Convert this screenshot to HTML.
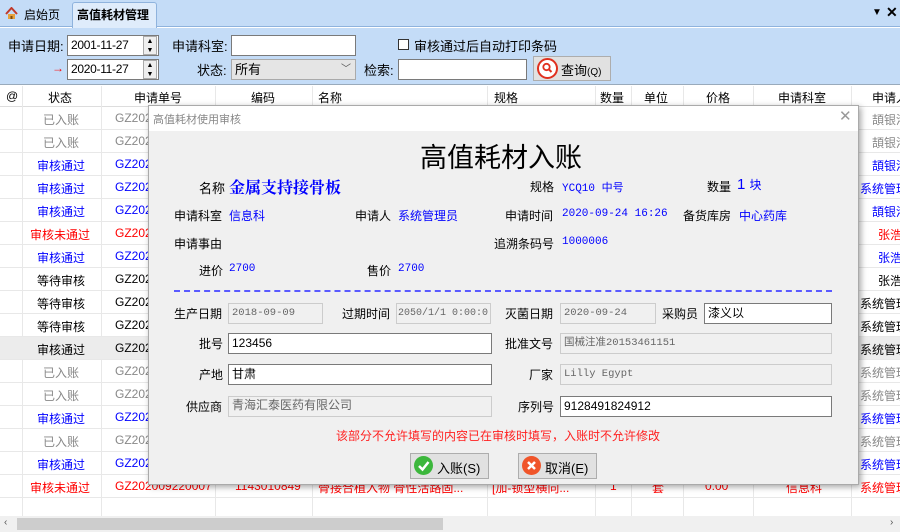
<!DOCTYPE html>
<html><head><meta charset="utf-8">
<style>
*{margin:0;padding:0;box-sizing:border-box}
body{width:900px;height:532px;overflow:hidden;position:relative;background:#fff;font-family:"Liberation Sans","Noto Sans CJK SC",sans-serif;font-size:12px;color:#000}
.a{position:absolute;white-space:nowrap}
.inp{position:absolute;background:#fff;border:1px solid #7a7a7a;height:21px;font-size:12px;line-height:19px;padding-left:3px;overflow:hidden}
.ro{background:#f0f0f0;border:1px solid #ccc;color:#666;font-family:"Liberation Mono","Noto Sans CJK SC",monospace;font-size:10.5px}
.row{position:absolute;left:0;width:900px;height:23px;border-bottom:1px solid #e8e8e8}
.row span{position:absolute;top:4px;white-space:nowrap}
.g{color:#888}.b{color:#0000ff}.r{color:#ff0000}.k{color:#000}
.hd span{position:absolute;top:3px}
.vl{position:absolute;top:86px;width:1px;height:430px;background:#e8e8e8}
.lbl{position:absolute;white-space:nowrap;font-size:12px}
.val{position:absolute;white-space:nowrap;color:#0000ff;font-size:12px}
.mono{font-family:"Liberation Mono","Noto Sans CJK SC",monospace;font-size:11px}
</style></head><body>
<div class="a" style="left:0;top:0;width:900px;height:27px;background:#c4dcf7;border-bottom:1px solid #8fb3dd"></div>
<div class="a" style="left:5px;top:7px;width:13px;height:13px">
<svg width="13" height="13"><path d="M1 7 L6.5 1 L12 7" fill="none" stroke="#c0392b" stroke-width="2"/><rect x="3" y="7" width="7" height="5" fill="#e8a13a"/><rect x="5.5" y="9" width="2" height="3" fill="#7a4a10"/></svg></div>
<div class="a" style="left:24px;top:6px;font-size:12px">启始页</div>
<div class="a" style="left:72px;top:2px;width:85px;height:26px;background:#dfecfb;border:1px solid #8fb3dd;border-bottom:none;border-radius:3px 3px 0 0"></div>
<div class="a" style="left:77px;top:6px;font-weight:bold;font-size:12px">高值耗材管理</div>
<div class="a" style="left:872px;top:7px;font-size:10px">▼</div>
<div class="a" style="left:886px;top:4px;font-size:14px;font-weight:bold">✕</div>
<div class="a" style="left:0;top:28px;width:900px;height:57px;background:#c4dcf7;border-bottom:1px solid #9ab"></div>
<div class="a" style="left:8px;top:36px;font-size:13px">申请日期:</div>
<div class="inp" style="left:67px;top:35px;width:92px;letter-spacing:-0.3px">2001-11-27</div>
<div class="a" style="left:143px;top:36px;width:14px;height:19px;border:1px solid #aaa;background:#eee;font-size:7px;line-height:9px;text-align:center">▲<br>▼</div>
<div class="a" style="left:52px;top:61px;color:red;font-size:12px">→</div>
<div class="inp" style="left:67px;top:59px;width:92px;letter-spacing:-0.3px">2020-11-27</div>
<div class="a" style="left:143px;top:60px;width:14px;height:19px;border:1px solid #aaa;background:#eee;font-size:7px;line-height:9px;text-align:center">▲<br>▼</div>
<div class="a" style="left:172px;top:36px;font-size:13px">申请科室:</div>
<div class="inp" style="left:231px;top:35px;width:125px"></div>
<div class="a" style="left:197px;top:60px;font-size:13px">状态:</div>
<div class="inp" style="left:231px;top:59px;width:125px;background:#e5e5e5;border-color:#aaa;font-size:13px">所有<span style="position:absolute;right:4px;top:0;font-size:10px;color:#555">﹀</span></div>
<div class="a" style="left:398px;top:39px;width:11px;height:11px;border:1px solid #333;background:#fff"></div>
<div class="a" style="left:414px;top:36px;font-size:13px">审核通过后自动打印条码</div>
<div class="a" style="left:364px;top:60px;font-size:13px">检索:</div>
<div class="inp" style="left:398px;top:59px;width:129px"></div>
<div class="a" style="left:533px;top:56px;width:78px;height:25px;background:#e1e1e1;border:1px solid #adadad"></div>
<div class="a" style="left:537px;top:58px;width:21px;height:21px;border:2px solid #e0301e;border-radius:50%;background:#fff"><svg width="17" height="17"><circle cx="7.5" cy="7" r="3.2" fill="none" stroke="#e0301e" stroke-width="1.8"/><path d="M10 9.5 L12.5 12" stroke="#e0301e" stroke-width="2"/></svg></div>
<div class="a" style="left:561px;top:60px;font-size:13px">查询<span style="font-size:10px">(Q)</span></div>
<div class="a hd" style="left:0;top:86px;width:900px;height:21px;background:#fff;border-bottom:1px solid #ddd">
<span style="left:6px">@</span><span style="left:48px">状态</span><span style="left:134px">申请单号</span><span style="left:251px">编码</span><span style="left:318px">名称</span><span style="left:494px">规格</span><span style="left:600px">数量</span><span style="left:644px">单位</span><span style="left:706px">价格</span><span style="left:778px">申请科室</span><span style="left:872px">申请人</span></div>
<div class="vl" style="left:22px"></div><div class="vl" style="left:101px"></div><div class="vl" style="left:215px"></div><div class="vl" style="left:312px"></div><div class="vl" style="left:487px"></div><div class="vl" style="left:595px"></div><div class="vl" style="left:631px"></div><div class="vl" style="left:683px"></div><div class="vl" style="left:753px"></div><div class="vl" style="left:851px"></div>
<div class="row g" style="top:107px"><span style="left:43px">已入账</span><span style="left:115px">GZ2020</span><span style="left:872px">頡银港</span></div>
<div class="row g" style="top:130px"><span style="left:43px">已入账</span><span style="left:115px">GZ2020</span><span style="left:872px">頡银港</span></div>
<div class="row b" style="top:153px"><span style="left:37px">审核通过</span><span style="left:115px">GZ2020</span><span style="left:872px">頡银港</span></div>
<div class="row b" style="top:176px"><span style="left:37px">审核通过</span><span style="left:115px">GZ2020</span><span style="left:860px">系统管理</span></div>
<div class="row b" style="top:199px"><span style="left:37px">审核通过</span><span style="left:115px">GZ2020</span><span style="left:872px">頡银港</span></div>
<div class="row r" style="top:222px"><span style="left:30px">审核未通过</span><span style="left:115px">GZ2020</span><span style="left:878px">张浩</span></div>
<div class="row b" style="top:245px"><span style="left:37px">审核通过</span><span style="left:115px">GZ2020</span><span style="left:878px">张浩</span></div>
<div class="row k" style="top:268px"><span style="left:37px">等待审核</span><span style="left:115px">GZ2020</span><span style="left:878px">张浩</span></div>
<div class="row k" style="top:291px"><span style="left:37px">等待审核</span><span style="left:115px">GZ2020</span><span style="left:860px">系统管理</span></div>
<div class="row k" style="top:314px"><span style="left:37px">等待审核</span><span style="left:115px">GZ2020</span><span style="left:860px">系统管理</span></div>
<div class="row k" style="top:337px;background:#ececec"><span style="left:37px">审核通过</span><span style="left:115px">GZ2020</span><span style="left:860px">系统管理</span></div>
<div class="row g" style="top:360px"><span style="left:43px">已入账</span><span style="left:115px">GZ2020</span><span style="left:860px">系统管理</span></div>
<div class="row g" style="top:383px"><span style="left:43px">已入账</span><span style="left:115px">GZ2020</span><span style="left:860px">系统管理</span></div>
<div class="row b" style="top:406px"><span style="left:37px">审核通过</span><span style="left:115px">GZ2020</span><span style="left:860px">系统管理</span></div>
<div class="row g" style="top:429px"><span style="left:43px">已入账</span><span style="left:115px">GZ2020</span><span style="left:860px">系统管理</span></div>
<div class="row b" style="top:452px"><span style="left:37px">审核通过</span><span style="left:115px">GZ2020</span><span style="left:860px">系统管理</span></div>
<div class="row r" style="top:475px"><span style="left:30px">审核未通过</span><span style="left:115px">GZ202009220007</span><span style="left:235px">1143010849</span><span style="left:318px">骨接合植入物 骨性活路固...</span><span style="left:492px">[加-锁型横向...</span><span style="left:610px">1</span><span style="left:652px">套</span><span style="left:705px">0.00</span><span style="left:786px">信息科</span><span style="left:860px">系统管理</span></div>
<div class="a" style="left:0;top:516px;width:900px;height:16px;background:#f0f0f0"></div>
<div class="a" style="left:17px;top:518px;width:426px;height:12px;background:#cdcdcd"></div>
<div class="a" style="left:4px;top:517px;font-size:10px;color:#555">‹</div>
<div class="a" style="left:890px;top:517px;font-size:10px;color:#555">›</div>
<div class="a" style="left:148px;top:105px;width:711px;height:380px;background:#f0f0f0;border:1px solid #aaa;box-shadow:2px 2px 6px rgba(0,0,0,.35)"></div>
<div class="a" style="left:149px;top:106px;width:709px;height:25px;background:#fff"></div>
<div class="a" style="left:153px;top:111px;font-size:11px;color:#888">高值耗材使用审核</div>
<div class="a" style="left:839px;top:107px;font-size:15px;color:#999">✕</div>
<div class="a" style="left:420px;top:136px;font-size:27px">高值耗材入账</div>
<div class="lbl" style="left:199px;top:178px;font-size:13px">名称</div>
<div class="val" style="left:229px;top:175px;font-size:16px;font-weight:bold;font-family:'Noto Serif CJK SC',serif">金属支持接骨板</div>
<div class="lbl" style="left:530px;top:178px">规格</div>
<div class="val mono" style="left:562px;top:179px">YCQ10 中号</div>
<div class="lbl" style="left:707px;top:178px">数量</div>
<div class="val" style="left:737px;top:176px;font-size:15px">1 <span style="font-size:12px">块</span></div>
<div class="lbl" style="left:174px;top:207px">申请科室</div><div class="val" style="left:229px;top:207px">信息科</div>
<div class="lbl" style="left:355px;top:207px">申请人</div><div class="val" style="left:398px;top:207px">系统管理员</div>
<div class="lbl" style="left:505px;top:207px">申请时间</div><div class="val mono" style="left:562px;top:208px">2020-09-24 16:26</div>
<div class="lbl" style="left:683px;top:207px">备货库房</div><div class="val" style="left:739px;top:207px">中心药库</div>
<div class="lbl" style="left:174px;top:235px">申请事由</div>
<div class="lbl" style="left:494px;top:235px">追溯条码号</div><div class="val mono" style="left:562px;top:236px">1000006</div>
<div class="lbl" style="left:199px;top:262px">进价</div><div class="val mono" style="left:229px;top:263px">2700</div>
<div class="lbl" style="left:367px;top:262px">售价</div><div class="val mono" style="left:398px;top:263px">2700</div>
<div class="a" style="left:174px;top:290px;width:658px;border-top:2px dashed #5a5aff"></div>
<div class="lbl" style="left:174px;top:305px">生产日期</div><div class="inp ro" style="left:228px;top:303px;width:95px">2018-09-09</div>
<div class="lbl" style="left:342px;top:305px">过期时间</div><div class="inp ro" style="left:396px;top:303px;width:95px;font-size:10px;padding-left:1px">2050/1/1 0:00:0</div>
<div class="lbl" style="left:505px;top:305px">灭菌日期</div><div class="inp ro" style="left:560px;top:303px;width:96px">2020-09-24</div>
<div class="lbl" style="left:662px;top:305px">采购员</div><div class="inp" style="left:704px;top:303px;width:128px">漆义以</div>
<div class="lbl" style="left:199px;top:335px">批号</div><div class="inp" style="left:228px;top:333px;width:264px">123456</div>
<div class="lbl" style="left:505px;top:335px">批准文号</div><div class="inp ro" style="left:560px;top:333px;width:272px">国械注准20153461151</div>
<div class="lbl" style="left:199px;top:366px">产地</div><div class="inp" style="left:228px;top:364px;width:264px">甘肃</div>
<div class="lbl" style="left:529px;top:366px">厂家</div><div class="inp ro" style="left:560px;top:364px;width:272px">Lilly Egypt</div>
<div class="lbl" style="left:186px;top:398px">供应商</div><div class="inp ro" style="left:228px;top:396px;width:264px;font-size:12px">青海汇泰医药有限公司</div>
<div class="lbl" style="left:518px;top:398px">序列号</div><div class="inp" style="left:560px;top:396px;width:272px">9128491824912</div>
<div class="a" style="left:336px;top:427px;color:#ff2020;font-size:12px">该部分不允许填写的内容已在审核时填写，入账时不允许修改</div>
<div class="a" style="left:410px;top:453px;width:79px;height:26px;background:#e1e1e1;border:1px solid #adadad"></div>
<div class="a" style="left:414px;top:456px;width:19px;height:19px;border-radius:50%;background:#3cb73c"><svg width="19" height="19"><path d="M5 10 L8.5 13.5 L14.5 6" fill="none" stroke="#fff" stroke-width="2.5"/></svg></div>
<div class="a" style="left:437px;top:458px;font-size:13px">入账(S)</div>
<div class="a" style="left:518px;top:453px;width:79px;height:26px;background:#e1e1e1;border:1px solid #adadad"></div>
<div class="a" style="left:522px;top:456px;width:19px;height:19px;border-radius:50%;background:#f0552a"><svg width="19" height="19"><path d="M6 6 L13 13 M13 6 L6 13" stroke="#fff" stroke-width="2.5"/></svg></div>
<div class="a" style="left:545px;top:458px;font-size:13px">取消(E)</div>
</body></html>
